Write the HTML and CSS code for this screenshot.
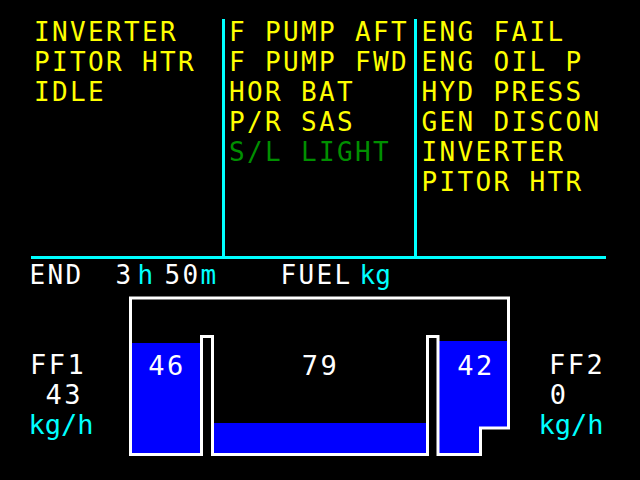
FILE: index.html
```html
<!DOCTYPE html>
<html>
<head>
<meta charset="utf-8">
<link rel="stylesheet" href="styles.css">
</head>
<body>
<div class="screen">
  <div class="panel">
    <div class="col col1">
      <div class="list">
        <div class="line yel">INVERTER</div>
        <div class="line yel">PITOR HTR</div>
        <div class="line yel">IDLE</div>
      </div>
    </div>
    <div class="col col2">
      <div class="list">
        <div class="line yel">F PUMP AFT</div>
        <div class="line yel">F PUMP FWD</div>
        <div class="line yel">HOR BAT</div>
        <div class="line yel">P/R SAS</div>
        <div class="line grn">S/L LIGHT</div>
      </div>
    </div>
    <div class="col col3">
      <div class="list">
        <div class="line yel">ENG FAIL</div>
        <div class="line yel">ENG OIL P</div>
        <div class="line yel">HYD PRESS</div>
        <div class="line yel">GEN DISCON</div>
        <div class="line yel">INVERTER</div>
        <div class="line yel">PITOR HTR</div>
      </div>
    </div>
  </div>
  <div class="status">
    <span class="wht">END</span>
    <span class="wht s-hours">3</span>
    <span class="cyn s-h">h</span>
    <span class="wht s-min">50</span>
    <span class="cyn s-m">m</span>
    <span class="wht s-fuel">FUEL</span>
    <span class="cyn s-kg">kg</span>
  </div>
  <div class="gauges">
    <div class="ff ff-left">
      <div class="wht ff-name1">FF1</div>
      <div class="wht ff-val1">43</div>
      <div class="cyn ff-unit ff-unit1">kg/h</div>
    </div>
    <svg class="tanks" width="384" height="161" viewBox="0 0 384 161">
      <rect x="4" y="47" width="68.5" height="110" fill="#0000ff"/>
      <rect x="85.5" y="127" width="212.5" height="30" fill="#0000ff"/>
      <polygon points="311,45 379,45 379,131 351,131 351,157 311,157" fill="#0000ff"/>
      <polygon points="73.5,158.5 2.5,158.5 2.5,2 380.5,2 380.5,132 352.5,132 352.5,158.5 310,158.5 310,40.5 299.5,40.5 299.5,158.5 84.5,158.5 84.5,40.5 73.5,40.5" fill="none" stroke="#ffffff" stroke-width="3" stroke-linejoin="miter"/>
      <text class="tank-num" x="39" y="79" text-anchor="middle">46</text>
      <text class="tank-num" x="192.5" y="79" text-anchor="middle">79</text>
      <text class="tank-num" x="348" y="79" text-anchor="middle">42</text>
    </svg>
    <div class="ff ff-right">
      <div class="wht ff-name2">FF2</div>
      <div class="wht ff-val2">0</div>
      <div class="cyn ff-unit ff-unit2">kg/h</div>
    </div>
  </div>
</div>
</body>
</html>
```
FILE: styles.css
```css
html, body {
  margin: 0;
  padding: 0;
  background: #000;
}
.screen {
  width: 640px;
  height: 480px;
  overflow: hidden;
  background: #000;
  padding-top: 19px;
  box-sizing: border-box;
  font-family: "DejaVu Sans Mono", monospace;
  font-size: 26px;
  letter-spacing: 2.35px;
  line-height: 30px;
}
.yel { color: #ffff00; }
.grn { color: #008f00; }
.wht { color: #ffffff; }
.cyn { color: #00ffff; }

.panel {
  margin-left: 31px;
  width: 575px;
  height: 240px;
  box-sizing: border-box;
  border-bottom: 3px solid #00ffff;
  display: flex;
}
.col {
  height: 237px;
  box-sizing: border-box;
}
.line {
  white-space: pre;
  height: 30px;
}
.col1 {
  width: 191px;
  padding-left: 3px;
}
.col2 {
  width: 192px;
  border-left: 3px solid #00ffff;
  padding-left: 4px;
}
.col3 {
  flex: 1;
  border-left: 3px solid #00ffff;
  padding-left: 4.5px;
}
.list {
  margin-top: -2px;
}

.status {
  display: flex;
  height: 31px;
  padding-top: 1px;
  box-sizing: border-box;
  padding-left: 29.5px;
}
.status span { white-space: pre; }
.s-hours { margin-left: 32px; }
.s-h { margin-left: 4px; }
.s-min { margin-left: 9px; }
.s-m { margin-left: 0; }
.s-fuel { margin-left: 62px; }
.s-kg { margin-left: 7px; letter-spacing: 0; }

.gauges {
  display: flex;
  margin-top: 6px;
}
.ff {
  width: 128px;
  font-size: 27px;
  letter-spacing: 2.5px;
  padding-top: 54px;
  box-sizing: border-box;
}
.ff div { white-space: pre; }
.tanks {
  display: block;
  flex: none;
}
.tank-num {
  fill: #ffffff;
  font-family: "DejaVu Sans Mono", monospace;
  font-size: 27px;
  letter-spacing: 2.5px;
}
.ff-name1 { padding-left: 30px; }
.ff-val1 { padding-left: 45.5px; }
.ff-unit { letter-spacing: 0; line-height: 29px; }
.ff-unit1 { padding-left: 28.5px; }
.ff-name2 { padding-left: 37px; }
.ff-val2 { padding-left: 37.7px; }
.ff-unit2 { padding-left: 26.5px; }
```
